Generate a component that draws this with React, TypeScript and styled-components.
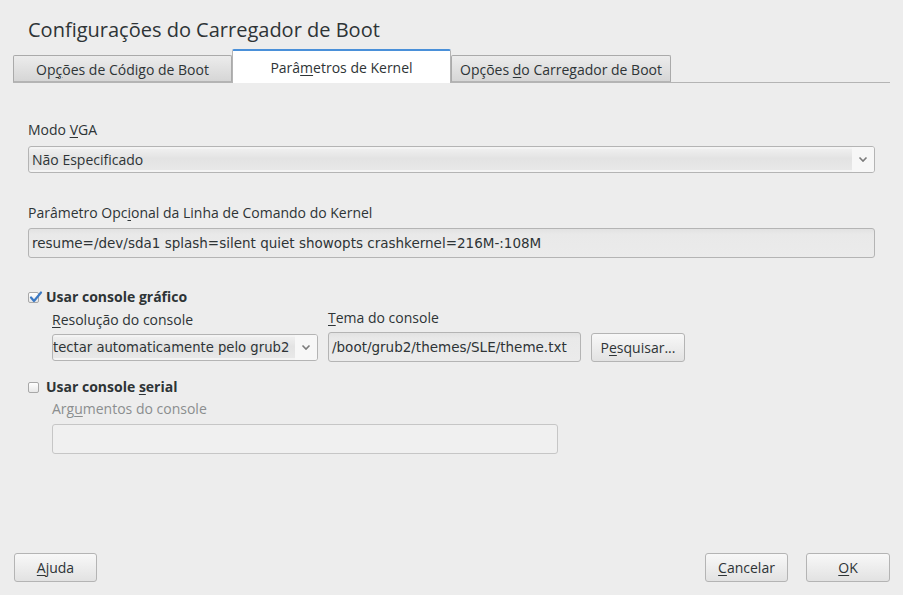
import React from "react";
import styled, { createGlobalStyle } from "styled-components";

const Global = createGlobalStyle`
  html, body { margin: 0; padding: 0; background: #ededed; }
  body { font-family: "Open Sans", "Noto Sans", sans-serif; color: #2e3436; }
`;

const Window = styled.div`
  width: 903px;
  height: 595px;
  box-sizing: border-box;
  background: #ededed;
  display: flex;
  flex-direction: column;
`;

const Title = styled.h1`
  margin: 0;
  padding: 16px 0 0 28px;
  height: 33px;
  font-size: 20px;
  font-weight: 400;
  line-height: 28px;
  color: #2e3436;
`;

const TabBar = styled.div`
  display: flex;
  align-items: flex-end;
  margin: 0 13px;
  height: 33px;
  border-bottom: 1px solid #b4b4b4;
`;

const Tab = styled.div<{ $active?: boolean; $width: number }>`
  width: ${(p) => p.$width}px;
  box-sizing: border-box;
  height: ${(p) => (p.$active ? "34px" : "27px")};
  margin-bottom: ${(p) => (p.$active ? "-1px" : "0")};
  display: flex;
  align-items: center;
  justify-content: center;
  font-size: 14px;
  padding-top: ${(p) => (p.$active ? "0" : "1px")};
  border: 1px solid ${(p) => (p.$active ? "#b4b4b4" : "#aaaaaa")};
  border-bottom: ${(p) => (p.$active ? "none" : "1px solid #b4b4b4")};
  border-top: ${(p) => (p.$active ? "2px solid #4a90d9" : "1px solid #aaaaaa")};
  border-radius: 2px 2px 0 0;
  background: ${(p) =>
    p.$active ? "#ffffff" : "linear-gradient(#ececec, #d6d6d6)"};
  color: #2e3436;
  white-space: pre;
`;

const Mn = styled.span`
  text-decoration: underline;
  text-underline-offset: 2px;
  text-decoration-thickness: 1px;
`;

const Content = styled.div`
  display: flex;
  flex-direction: column;
  padding: 0 28px;
  flex: 1;
`;

const Label = styled.div<{ $disabled?: boolean }>`
  font-size: 14px;
  line-height: 18px;
  color: ${(p) => (p.$disabled ? "#8b8e8f" : "#2e3436")};
`;

const Select = styled.div<{ $width?: number }>`
  display: flex;
  box-sizing: border-box;
  height: 27px;
  width: ${(p) => (p.$width ? `${p.$width}px` : "auto")};
  border: 1px solid #b4b4b4;
  border-radius: 3px;
  overflow: hidden;
  background: #f4f4f4;
`;

const SelectValue = styled.div<{ $mono?: boolean }>`
  flex: 1;
  display: flex;
  align-items: center;
  padding-left: ${(p) => (p.$mono ? "0px" : "3px")};
  font-size: ${(p) => (p.$mono ? "13.2px" : "14px")};
  font-family: ${(p) =>
    p.$mono ? `"DejaVu Sans", sans-serif` : `"Open Sans", sans-serif`};
  background: linear-gradient(#efefef 0%, #e3e3e3 45%, #e8e8e8 100%);
  margin: 2px 0;
  white-space: nowrap;
  overflow: hidden;
`;

const SelectArrow = styled.div`
  width: 22px;
  display: flex;
  align-items: center;
  justify-content: center;
  background: #f7f7f7;
`;

const TextInput = styled.div<{ $width?: number; $disabled?: boolean }>`
  box-sizing: border-box;
  height: 30px;
  width: ${(p) => (p.$width ? `${p.$width}px` : "auto")};
  border: 1px solid ${(p) => (p.$disabled ? "#c6c6c6" : "#b4b4b4")};
  border-radius: 3px;
  background: ${(p) =>
    p.$disabled ? "#f0f0f0" : "linear-gradient(#e2e2e2, #e9e9e9 20%, #ebebeb)"};
  display: flex;
  align-items: center;
  padding-left: 3px;
  font-family: "DejaVu Sans", sans-serif;
  font-size: 13.5px;
  color: #2e3436;
  white-space: nowrap;
  overflow: hidden;
`;

const Button = styled.div<{ $width: number }>`
  box-sizing: border-box;
  width: ${(p) => p.$width}px;
  height: 29px;
  border: 1px solid #b4b4b4;
  border-radius: 3px;
  background: linear-gradient(#f8f8f8, #e2e2e2);
  display: flex;
  align-items: center;
  justify-content: center;
  font-size: 14px;
  color: #2e3436;
  white-space: pre;
`;

const CheckRow = styled.div`
  display: flex;
  align-items: center;
  gap: 7px;
  font-size: 14px;
  font-weight: 700;
  line-height: 18px;
`;

const Box = styled.div`
  width: 11px;
  height: 11px;
  box-sizing: border-box;
  border: 1px solid #a8a8a8;
  border-radius: 2px;
  background: linear-gradient(#ffffff, #e8e8e8);
  position: relative;
`;

const Check = styled.svg`
  position: absolute;
  left: 0px;
  top: -2px;
`;

const ConsoleRow = styled.div`
  display: flex;
  align-items: flex-end;
  margin-left: 24px;
  gap: 10px;
`;

const Col = styled.div<{ $gap?: number }>`
  display: flex;
  flex-direction: column;
  gap: ${(p) => p.$gap ?? 5}px;
`;

const Footer = styled.div`
  display: flex;
  justify-content: space-between;
  padding: 0 13px 13px 14px;
`;

const FooterRight = styled.div`
  display: flex;
  gap: 18px;
`;

const Chevron = () => (
  <svg width="10" height="7" viewBox="0 0 10 7">
    <path d="M1.5 1.5 L5 5 L8.5 1.5" fill="none" stroke="#7b7b7b" strokeWidth="1.6" />
  </svg>
);

export default function App() {
  return (
    <Window>
      <Global />
      <Title>Configurações do Carregador de Boot</Title>
      <TabBar>
        <Tab $width={219}>
          <span>
            Op<Mn>ç</Mn>ões de Código de Boot
          </span>
        </Tab>
        <Tab $active $width={219}>
          <span>
            Parâ<Mn>m</Mn>etros de Kernel
          </span>
        </Tab>
        <Tab $width={220}>
          <span>
            Opções <Mn>d</Mn>o Carregador de Boot
          </span>
        </Tab>
      </TabBar>
      <Content>
        <Label style={{ marginTop: 38 }}>
          Modo <Mn>V</Mn>GA
        </Label>
        <Select style={{ marginTop: 7 }}>
          <SelectValue>Não Especificado</SelectValue>
          <SelectArrow>
            <Chevron />
          </SelectArrow>
        </Select>
        <Label style={{ marginTop: 31 }}>
          Parâmetro Opc<Mn>i</Mn>onal da Linha de Comando do Kernel
        </Label>
        <TextInput style={{ marginTop: 6 }}>
          resume=/dev/sda1 splash=silent quiet showopts crashkernel=216M-:108M
        </TextInput>
        <CheckRow style={{ marginTop: 30 }}>
          <Box>
            <Check width="14" height="13" viewBox="0 0 14 13">
              <path d="M2 6.5 L5 10 L12 1.5" fill="none" stroke="#3b79c4" strokeWidth="2.2" strokeLinecap="round" strokeLinejoin="round" />
            </Check>
          </Box>
          <span>
            Usar console <Mn>g</Mn>ráfico
          </span>
        </CheckRow>
        <ConsoleRow style={{ marginTop: 3 }}>
          <Col>
            <Label>
              <Mn>R</Mn>esolução do console
            </Label>
            <Select $width={266} style={{ marginBottom: 1 }}>
              <SelectValue $mono>tectar automaticamente pelo grub2</SelectValue>
              <SelectArrow>
                <Chevron />
              </SelectArrow>
            </Select>
          </Col>
          <Col $gap={5}>
            <Label>
              <Mn>T</Mn>ema do console
            </Label>
            <TextInput $width={253}>/boot/grub2/themes/SLE/theme.txt</TextInput>
          </Col>
          <Button $width={94}>
            <span>
              P<Mn>e</Mn>squisar...
            </span>
          </Button>
        </ConsoleRow>
        <CheckRow style={{ marginTop: 16 }}>
          <Box />
          <span>
            Usar console <Mn>s</Mn>erial
          </span>
        </CheckRow>
        <Col style={{ marginLeft: 24, marginTop: 4 }} $gap={6}>
          <Label $disabled>
            Arg<Mn>u</Mn>mentos do console
          </Label>
          <TextInput $width={506} $disabled />
        </Col>
      </Content>
      <Footer>
        <Button $width={83}>
          <span>
            <Mn>A</Mn>juda
          </span>
        </Button>
        <FooterRight>
          <Button $width={83}>
            <span>
              <Mn>C</Mn>ancelar
            </span>
          </Button>
          <Button $width={84}>
            <span>
              <Mn>O</Mn>K
            </span>
          </Button>
        </FooterRight>
      </Footer>
    </Window>
  );
}
